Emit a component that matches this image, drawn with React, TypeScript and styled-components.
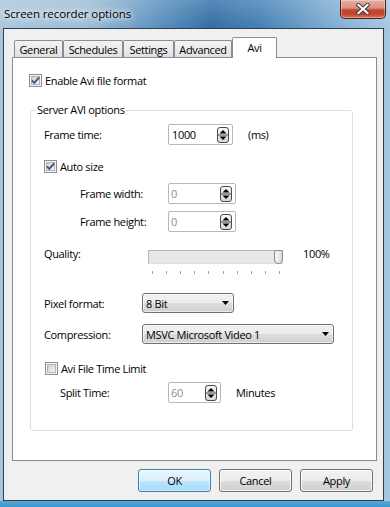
import React from "react";
import styled, { createGlobalStyle } from "styled-components";

const FONT = `"Open Sans", "Noto Sans", "DejaVu Sans", sans-serif`;

const GlobalStyle = createGlobalStyle`
  html, body { margin: 0; padding: 0; background: #ffffff; }
  body { font-family: ${FONT}; }
  *, *::before, *::after { box-sizing: border-box; }
`;

const Window = styled.div`
  width: 390px;
  height: 507px;
  display: flex;
  flex-direction: column;
  padding: 0 6px 6px 3px;
  overflow: hidden;
  font-family: ${FONT};
  font-size: 11px;
  letter-spacing: -0.35px;
  color: #000;
  background:
    linear-gradient(0deg, #3e96cd 0px, #57a7d8 6px, rgba(0, 0, 0, 0) 6px),
    linear-gradient(180deg, rgba(255, 255, 255, 0.2) 0px, rgba(255, 255, 255, 0) 30px),
    linear-gradient(90deg, #a9c5dc 0%, #9dbcd6 22%, #5a90bf 40%, #2f6ca4 54%, #3f7db3 66%, #79a9d0 84%, #a6c8e2 100%);
`;

const TitleBar = styled.div`
  flex: none;
  height: 28px;
  display: flex;
  align-items: flex-start;
  justify-content: space-between;
  padding-left: 1px;
`;

const Title = styled.div`
  padding-top: 6px;
  line-height: 16px;
  font-size: 11.5px;
  letter-spacing: -0.1px;
  color: #000;
  text-shadow: 0 0 5px rgba(255, 255, 255, 0.95), 0 0 9px rgba(255, 255, 255, 0.85),
    0 0 14px rgba(255, 255, 255, 0.7);
`;

const CloseButton = styled.div`
  width: 46px;
  height: 19px;
  margin-right: -2px;
  display: flex;
  align-items: center;
  justify-content: center;
  border: 1px solid #4a1e17;
  border-top: none;
  border-radius: 0 0 5px 5px;
  background: linear-gradient(180deg, #e8ab9e 0%, #d98e80 45%, #c5452e 55%, #c4432a 78%, #df7352 100%);
  box-shadow: inset 0 0 0 1px rgba(255, 255, 255, 0.35);
`;

const Client = styled.div`
  flex: 1;
  display: flex;
  flex-direction: column;
  background: #f0f0f0;
  border: 1px solid #2e3f52;
  padding: 8px 6px 8px 8px;
`;

const Tabs = styled.div`
  flex: 1;
  display: flex;
  flex-direction: column;
`;

const TabStrip = styled.div`
  flex: none;
  height: 20px;
  display: flex;
  align-items: flex-end;
  padding-left: 2px;
`;

const Tab = styled.div<{ $w: number; $active?: boolean }>`
  width: ${(p) => p.$w}px;
  height: ${(p) => (p.$active ? 21 : 17)}px;
  margin-bottom: ${(p) => (p.$active ? -1 : 0)}px;
  position: relative;
  z-index: ${(p) => (p.$active ? 2 : 1)};
  display: flex;
  align-items: center;
  justify-content: center;
  padding-bottom: ${(p) => (p.$active ? 2 : 0)}px;
  border: 1px solid #898c95;
  border-bottom: none;
  border-radius: 2px 2px 0 0;
  background: ${(p) =>
    p.$active ? "#ffffff" : "linear-gradient(180deg, #f3f3f3 0%, #ebebeb 50%, #e0e0e0 100%)"};
  white-space: nowrap;
`;

const Panel = styled.div`
  flex: 1;
  display: flex;
  flex-direction: column;
  background: #ffffff;
  border: 1px solid #898c95;
  padding-top: 16px;
`;

const CheckRow = styled.div<{ $indent: number; $top?: number }>`
  display: flex;
  align-items: center;
  gap: 3px;
  height: 13px;
  margin-left: ${(p) => p.$indent}px;
  margin-top: ${(p) => p.$top ?? 0}px;
  line-height: 13px;
  white-space: nowrap;
`;

const Group = styled.fieldset`
  min-width: 0;
  margin: 15px 23px 0 17px;
  padding: 0 0 27px 0;
  border: 1px solid #d5dfe5;
  border-radius: 3px;
  display: flex;
  flex-direction: column;
`;

const Legend = styled.legend`
  margin-left: 5px;
  padding: 0 1px;
  line-height: 16px;
`;

const Row = styled.div<{ $top: number; $h?: number }>`
  display: flex;
  align-items: center;
  height: ${(p) => p.$h ?? 21}px;
  margin-top: ${(p) => p.$top}px;
  padding-left: 13px;
  white-space: nowrap;
`;

const QualityRow = styled(Row)`
  align-items: flex-start;
  line-height: 16px;
`;

const Label = styled.span<{ $w: number; $indent?: number }>`
  flex: none;
  width: ${(p) => p.$w}px;
  padding-left: ${(p) => p.$indent ?? 0}px;
`;

const Unit = styled.span`
  margin-left: 15px;
`;

const Spinner = styled.div<{ $w: number }>`
  flex: none;
  width: ${(p) => p.$w}px;
  height: 21px;
  display: flex;
  align-items: center;
  justify-content: space-between;
  padding: 0 3px 0 2px;
  background: #ffffff;
  border: 1px solid #b5b7bd;
  border-radius: 2px;
`;

const SpinValue = styled.span<{ $disabled?: boolean }>`
  color: ${(p) => (p.$disabled ? "#8d8d8d" : "#000")};
  padding-left: ${(p) => (p.$disabled ? 0 : 1)}px;
`;

const SliderBox = styled.div`
  flex: none;
  width: 135px;
  margin-top: 4px;
  display: flex;
  flex-direction: column;
`;

const Track = styled.div`
  height: 14px;
  display: flex;
  justify-content: flex-end;
  background: #e7e9e9;
  border: 1px solid;
  border-color: #b4b4b4 #e0e0e0 #e0e0e0 #b4b4b4;
`;

const Thumb = styled.div`
  width: 9px;
  margin: -1px -1px -1px 0;
  border: 1px solid #8a8a8a;
  border-radius: 2px 2px 4px 4px;
  background: linear-gradient(90deg, #f6f6f6 0%, #e9e9e9 60%, #d4d4d4 100%);
`;

const Ticks = styled.div`
  height: 3px;
  margin-top: 7px;
  display: flex;
  justify-content: space-between;
  padding: 0 3px 0 4px;
`;

const Tick = styled.span`
  width: 1px;
  height: 3px;
  background: #a3a3a3;
`;

const Percent = styled.span`
  margin-left: 20px;
`;

const Combo = styled.div<{ $w: number }>`
  flex: none;
  width: ${(p) => p.$w}px;
  height: 20px;
  display: flex;
  align-items: center;
  justify-content: space-between;
  padding: 0 4px 0 3px;
  border: 1px solid #707070;
  border-radius: 3px;
  background: linear-gradient(180deg, #f2f2f2 0%, #ebebeb 50%, #dddddd 50%, #cfcfcf 100%);
  box-shadow: inset 0 0 0 1px rgba(255, 255, 255, 0.6);
`;

const ButtonRow = styled.div`
  flex: none;
  display: flex;
  justify-content: flex-end;
  gap: 8px;
  margin-top: 8px;
  padding-right: 4px;
`;

const Button = styled.div<{ $default?: boolean }>`
  width: 73px;
  height: 23px;
  display: flex;
  align-items: center;
  justify-content: center;
  border: 1px solid ${(p) => (p.$default ? "#3c7fb1" : "#707070")};
  border-radius: 3px;
  background: ${(p) =>
    p.$default
      ? "linear-gradient(180deg, #eaf6fd 0%, #d9f0fc 50%, #bee6fd 50%, #a7d9f5 100%)"
      : "linear-gradient(180deg, #f2f2f2 0%, #ebebeb 50%, #dddddd 50%, #cfcfcf 100%)"};
  box-shadow: inset 0 0 0 1px rgba(255, 255, 255, ${(p) => (p.$default ? 0.5 : 0.7)});
  color: #000;
`;

const CheckBox: React.FC<{ checked?: boolean }> = ({ checked }) => (
  <svg width="13" height="13" viewBox="0 0 13 13" style={{ flex: "none" }}>
    <defs>
      <linearGradient id="cbInner" x1="0" y1="0" x2="1" y2="1">
        <stop offset="0" stopColor="#c9cdd3" />
        <stop offset="1" stopColor="#f7f7f7" />
      </linearGradient>
    </defs>
    <rect x="0.5" y="0.5" width="12" height="12" fill="#f4f4f4" stroke="#8e8f8f" />
    <rect x="2.5" y="2.5" width="8" height="8" fill="url(#cbInner)" stroke="#b0b5bb" />
    {checked && (
      <path d="M3 6.4 L5.3 8.9 L10.2 3.4" fill="none" stroke="#41557f" strokeWidth="1.9" />
    )}
  </svg>
);

const SpinIcon: React.FC = () => (
  <svg width="12" height="16" viewBox="0 0 12 16" style={{ flex: "none" }}>
    <defs>
      <linearGradient id="spinBg" x1="0" y1="0" x2="0" y2="1">
        <stop offset="0" stopColor="#f8f8f8" />
        <stop offset="1" stopColor="#d6d6d6" />
      </linearGradient>
    </defs>
    <rect x="0.5" y="0.5" width="11" height="15" rx="2.5" fill="url(#spinBg)" stroke="#4a4a4a" />
    <line x1="1" y1="8" x2="11" y2="8" stroke="#4a4a4a" />
    <path d="M2.5 6.5 L6 3 L9.5 6.5 Z" fill="#000" />
    <path d="M2.5 9.5 L6 13 L9.5 9.5 Z" fill="#000" />
  </svg>
);

const ComboArrow: React.FC = () => (
  <svg width="7" height="4" viewBox="0 0 7 4" style={{ flex: "none" }}>
    <path d="M0 0 H7 L3.5 4 Z" fill="#000" />
  </svg>
);

const CloseGlyph: React.FC = () => (
  <svg width="14" height="12" viewBox="0 0 14 12">
    <path d="M2.5 2 L11.5 10 M11.5 2 L2.5 10" stroke="#3b3b3b" strokeWidth="4.2" strokeLinecap="square" />
    <path d="M2.5 2 L11.5 10 M11.5 2 L2.5 10" stroke="#ffffff" strokeWidth="2.2" strokeLinecap="square" />
  </svg>
);

const tabs = [
  { name: "General", w: 49 },
  { name: "Schedules", w: 60 },
  { name: "Settings", w: 51 },
  { name: "Advanced", w: 58 },
  { name: "Avi", w: 45, active: true },
];

export default function App() {
  return (
    <>
      <GlobalStyle />
      <Window>
        <TitleBar>
          <Title>Screen recorder options</Title>
          <CloseButton>
            <CloseGlyph />
          </CloseButton>
        </TitleBar>
        <Client>
          <Tabs>
            <TabStrip>
              {tabs.map((t) => (
                <Tab key={t.name} $w={t.w} $active={t.active}>
                  {t.name}
                </Tab>
              ))}
            </TabStrip>
            <Panel>
              <CheckRow $indent={16}>
                <CheckBox checked />
                <span>Enable Avi file format</span>
              </CheckRow>
              <Group>
                <Legend>Server AVI options</Legend>
                <Row $top={6}>
                  <Label $w={124}>Frame time:</Label>
                  <Spinner $w={65}>
                    <SpinValue>1000</SpinValue>
                    <SpinIcon />
                  </Spinner>
                  <Unit>(ms)</Unit>
                </Row>
                <CheckRow $indent={13} $top={15}>
                  <CheckBox checked />
                  <span>Auto size</span>
                </CheckRow>
                <Row $top={10}>
                  <Label $w={124} $indent={36}>
                    Frame width:
                  </Label>
                  <Spinner $w={68}>
                    <SpinValue $disabled>0</SpinValue>
                    <SpinIcon />
                  </Spinner>
                </Row>
                <Row $top={7}>
                  <Label $w={124} $indent={36}>
                    Frame height:
                  </Label>
                  <Spinner $w={68}>
                    <SpinValue $disabled>0</SpinValue>
                    <SpinIcon />
                  </Spinner>
                </Row>
                <QualityRow $top={14} $h={29}>
                  <Label $w={104}>Quality:</Label>
                  <SliderBox>
                    <Track>
                      <Thumb />
                    </Track>
                    <Ticks>
                      {Array.from({ length: 10 }).map((_, i) => (
                        <Tick key={i} />
                      ))}
                    </Ticks>
                  </SliderBox>
                  <Percent>100%</Percent>
                </QualityRow>
                <Row $top={18} $h={20}>
                  <Label $w={98}>Pixel format:</Label>
                  <Combo $w={92}>
                    <span>8 Bit</span>
                    <ComboArrow />
                  </Combo>
                </Row>
                <Row $top={11} $h={20}>
                  <Label $w={98}>Compression:</Label>
                  <Combo $w={192}>
                    <span>MSVC Microsoft Video 1</span>
                    <ComboArrow />
                  </Combo>
                </Row>
                <CheckRow $indent={14} $top={18}>
                  <CheckBox />
                  <span>Avi File Time Limit</span>
                </CheckRow>
                <Row $top={7}>
                  <Label $w={124} $indent={16}>
                    Split Time:
                  </Label>
                  <Spinner $w={53}>
                    <SpinValue $disabled>60</SpinValue>
                    <SpinIcon />
                  </Spinner>
                  <Unit>Minutes</Unit>
                </Row>
              </Group>
            </Panel>
          </Tabs>
          <ButtonRow>
            <Button $default>OK</Button>
            <Button>Cancel</Button>
            <Button>Apply</Button>
          </ButtonRow>
        </Client>
      </Window>
    </>
  );
}
